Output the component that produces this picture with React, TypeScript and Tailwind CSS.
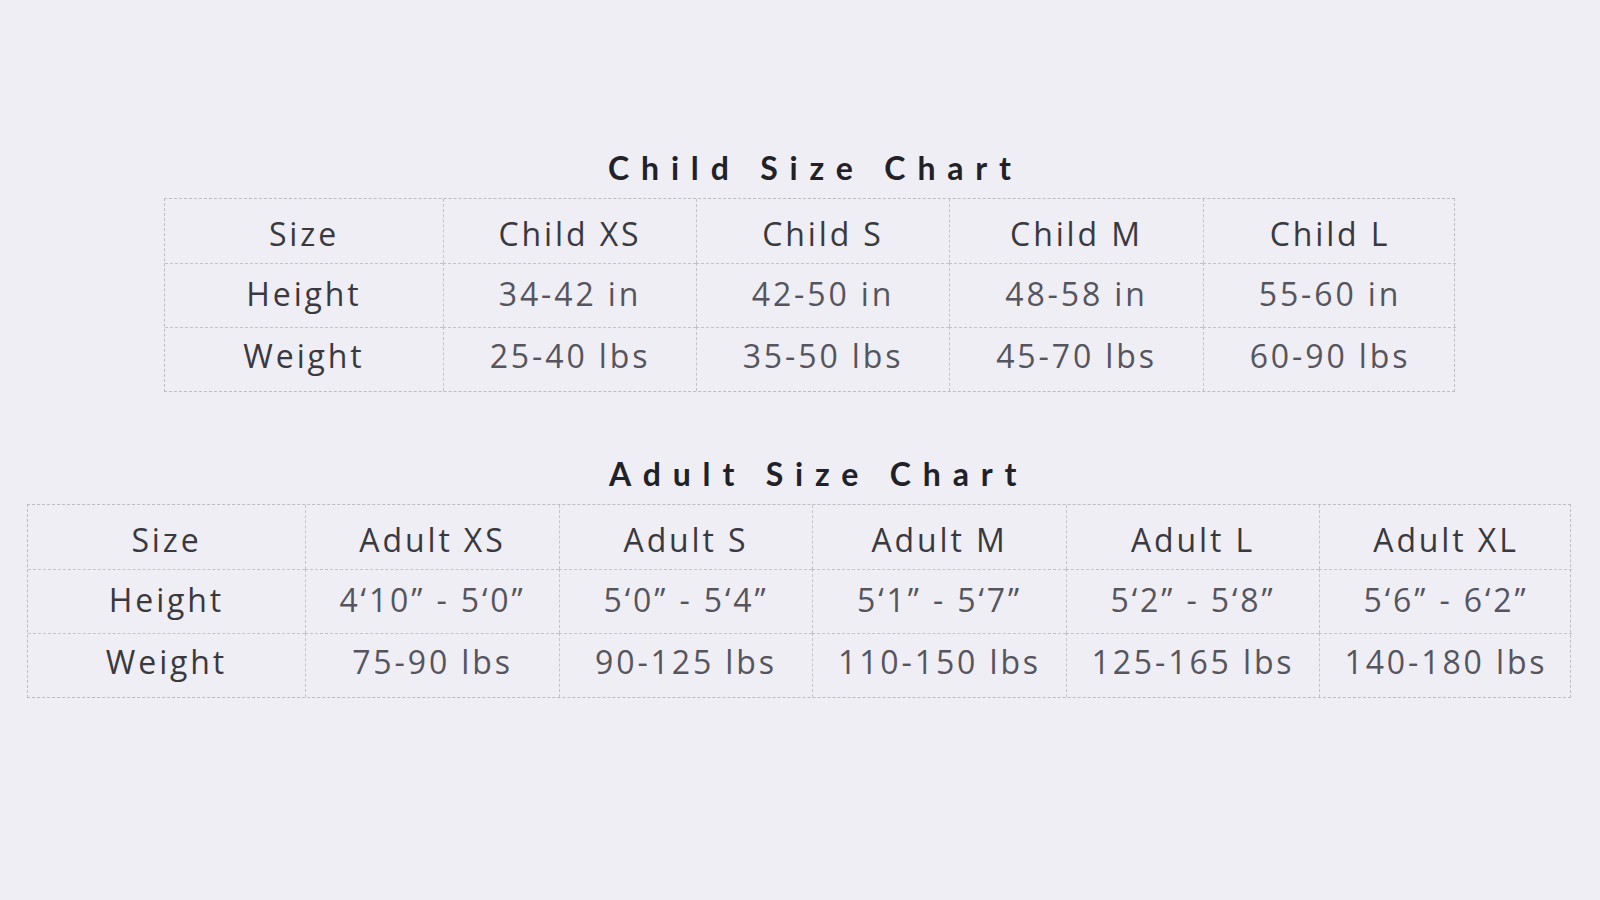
const CHILD = {
  title: 'Child Size Chart',
  head: ['Size', 'Child XS', 'Child S', 'Child M', 'Child L'],
  rows: [
    ['Height', '34-42 in', '42-50 in', '48-58 in', '55-60 in'],
    ['Weight', '25-40 lbs', '35-50 lbs', '45-70 lbs', '60-90 lbs'],
  ],
};

const ADULT = {
  title: 'Adult Size Chart',
  head: ['Size', 'Adult XS', 'Adult S', 'Adult M', 'Adult L', 'Adult XL'],
  rows: [
    ['Height', '4‘10” - 5‘0”', '5‘0” - 5‘4”', '5‘1” - 5‘7”', '5‘2” - 5‘8”', '5‘6” - 6‘2”'],
    ['Weight', '75-90 lbs', '90-125 lbs', '110-150 lbs', '125-165 lbs', '140-180 lbs'],
  ],
};

type Chart = { title: string; head: string[]; rows: string[][] };

const ROW_PAD = ['pt-[6px]', 'pb-[4px]', 'pb-[8px]'];

function SizeTable({ chart, cols }: { chart: Chart; cols: string }) {
  const all = [chart.head, ...chart.rows];
  return (
    <div className={`grid ${cols} border border-dashed border-[#bdbcc6]`}>
      {all.map((row, r) =>
        row.map((cell, c) => (
          <div
            key={`${r}-${c}`}
            className={`flex h-[64px] items-center justify-center text-[32px] font-normal tracking-[0.09em] ${ROW_PAD[r]} ${
              c > 0 ? 'border-l border-dashed border-[#c4c3cc]' : ''
            } ${r > 0 ? 'border-t border-dashed border-[#c4c3cc]' : ''} ${
              r === 0 || c === 0 ? 'text-[#3a3940]' : 'text-[#56555e]'
            }`}
          >
            {cell}
          </div>
        )),
      )}
    </div>
  );
}

export default function App() {
  return (
    <div
      className="h-[900px] w-[1600px] overflow-hidden bg-[#efeef4]"
      style={{ fontFamily: '"Open Sans", Lato, sans-serif' }}
    >
      <div className="pt-[148px]">
        <h2
          className="ml-[608px] text-[32px] font-bold leading-[40px] tracking-[0.37em] text-[#222127]"
          style={{ fontFamily: 'Lato, sans-serif' }}
        >
          {CHILD.title}
        </h2>
        <div className="ml-[164px] mt-[10px] w-[1291px]">
          <SizeTable chart={CHILD} cols="grid-cols-[278px_253px_253px_254px_253px]" />
        </div>

        <h2
          className="ml-[609px] mt-[62px] text-[32px] font-bold leading-[40px] tracking-[0.37em] text-[#222127]"
          style={{ fontFamily: 'Lato, sans-serif' }}
        >
          {ADULT.title}
        </h2>
        <div className="ml-[27px] mt-[10px] w-[1544px]">
          <SizeTable chart={ADULT} cols="grid-cols-[277px_254px_253px_254px_253px_253px]" />
        </div>
      </div>
    </div>
  );
}
